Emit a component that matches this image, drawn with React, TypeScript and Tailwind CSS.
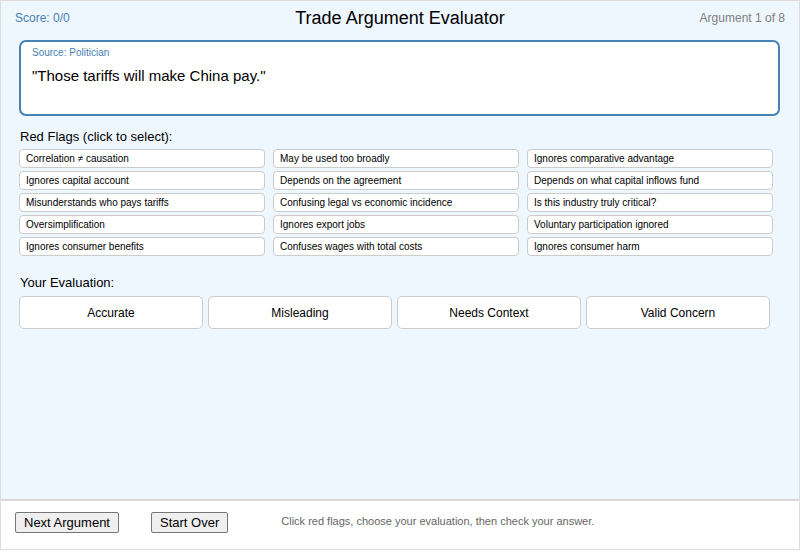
import React from "react";

const flags = [
  "Correlation ≠ causation",
  "May be used too broadly",
  "Ignores comparative advantage",
  "Ignores capital account",
  "Depends on the agreement",
  "Depends on what capital inflows fund",
  "Misunderstands who pays tariffs",
  "Confusing legal vs economic incidence",
  "Is this industry truly critical?",
  "Oversimplification",
  "Ignores export jobs",
  "Voluntary participation ignored",
  "Ignores consumer benefits",
  "Confuses wages with total costs",
  "Ignores consumer harm",
];

const evals = ["Accurate", "Misleading", "Needs Context", "Valid Concern"];

export default function App() {
  return (
    <div
      className="w-[800px] h-[550px] border border-[#dcdcdc] flex flex-col bg-white"
      style={{ fontFamily: '"Liberation Sans", Arial, sans-serif' }}
    >
      <div className="flex-1 bg-[#eef6fe] flex flex-col">
        <div className="grid grid-cols-[1fr_auto_1fr] items-center h-[34px] px-[14px]">
          <div className="text-[12px] text-[#4682b4]">Score: 0/0</div>
          <div className="text-[18px] text-black">Trade Argument Evaluator</div>
          <div className="text-[12px] text-[#808080] text-right">Argument 1 of 8</div>
        </div>
        <div className="px-[18px] pt-[5px]">
          <div className="h-[76px] border-2 border-[#4682b4] rounded-[7px] bg-white px-[11px] pt-[4px] mr-[1px]">
            <div className="text-[10px] text-[#4682b4] leading-[14px]">Source: Politician</div>
            <div className="text-[15px] text-black leading-[20px] mt-[6px]">
              "Those tariffs will make China pay."
            </div>
          </div>
          <div className="text-[13px] text-black leading-[17px] mt-[12px] pl-[1px]">
            Red Flags (click to select):
          </div>
          <div className="grid grid-cols-[246px_246px_246px] gap-x-[8px] gap-y-[3px] mt-[4px]">
            {flags.map((f) => (
              <div
                key={f}
                className="h-[19px] border border-[#cccccc] rounded-[4px] bg-white text-[10px] leading-[17px] px-[6px] text-black whitespace-nowrap"
              >
                {f}
              </div>
            ))}
          </div>
          <div className="text-[13px] text-black leading-[17px] mt-[18px] pl-[1px]">Your Evaluation:</div>
          <div className="flex gap-[5px] mt-[5px]">
            {evals.map((e) => (
              <div
                key={e}
                className="w-[184px] h-[33px] border border-[#cccccc] rounded-[5px] bg-white text-[12px] flex items-center justify-center text-black"
              >
                {e}
              </div>
            ))}
          </div>
        </div>
      </div>
      <div className="h-[50px] border-t-2 border-[#d8d8d8] bg-white flex items-start pt-[11px] px-[14px]">
        <button className="h-[21px] px-[8px] bg-[#efefef] border border-[#767676] rounded-[2px] text-[13px] text-black leading-[17px]">
          Next Argument
        </button>
        <button className="h-[21px] px-[8px] bg-[#efefef] border border-[#767676] rounded-[2px] text-[13px] text-black leading-[17px] ml-[32px]">
          Start Over
        </button>
        <div className="text-[11px] text-[#666666] ml-[53px] leading-[19px]">
          Click red flags, choose your evaluation, then check your answer.
        </div>
      </div>
    </div>
  );
}
